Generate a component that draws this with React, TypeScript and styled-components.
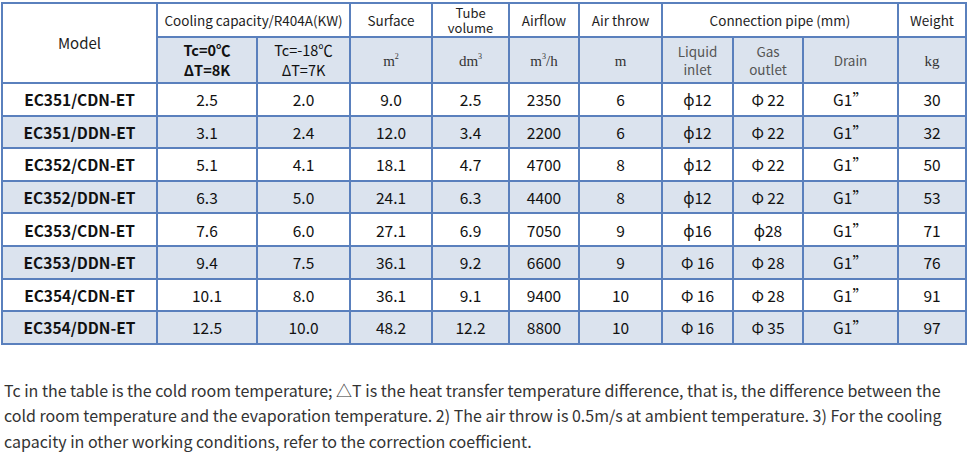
import React from "react";
import styled, { createGlobalStyle } from "styled-components";

const Global = createGlobalStyle`
  html, body { margin: 0; padding: 0; background: #fff; }
  body { font-family: "Noto Sans CJK SC", "Noto Sans", sans-serif; color: #222; }
`;

const Page = styled.div`
  padding: 2px 0 0 1px;
  width: 971px;
  box-sizing: border-box;
`;

const Table = styled.table`
  border-collapse: collapse;
  table-layout: fixed;
  width: 966px;
  border: 2px solid #5a80bd;
`;

const Th = styled.th<{ $shade?: boolean; $h?: number }>`
  border: 2px solid #5a80bd;
  background: ${(p) => (p.$shade ? "#dbe3ee" : "#ffffff")};
  font-weight: 400;
  font-size: 13.5px;
  line-height: 16px;
  color: #1e1e1e;
  text-align: center;
  vertical-align: middle;
  padding: 0 2px;
  height: ${(p) => (p.$h ? `${p.$h}px` : "auto")};
`;

const ModelHead = styled(Th)`
  font-size: 15px;
`;

const Stack = styled.span`
  display: block;
  font-size: 13px;
  line-height: 15px;
`;

const Grey = styled.span`
  display: block;
  color: #555;
  font-size: 13.5px;
  line-height: 18px;
`;

const Cond = styled.span<{ $bold?: boolean }>`
  display: block;
  font-size: 14.5px;
  line-height: 20px;
  font-weight: ${(p) => (p.$bold ? 700 : 400)};
  color: #111;
`;

const Unit = styled.span`
  font-family: "Liberation Serif", "DejaVu Serif", serif;
  font-size: 15px;
  color: #333;
  sup {
    font-size: 8px;
    vertical-align: 7px;
    line-height: 0;
  }
`;

const Row = styled.tr<{ $shade: boolean }>`
  background: ${(p) => (p.$shade ? "#dbe3ee" : "#ffffff")};
  height: 32.6px;
`;

const Td = styled.td<{ $bold?: boolean }>`
  border: 2px solid #5a80bd;
  text-align: center;
  vertical-align: middle;
  padding: 0 2px;
  font-size: 15.5px;
  line-height: 18px;
  color: #111;
  font-weight: ${(p) => (p.$bold ? 700 : 400)};
`;

const Note = styled.p`
  margin: 33px 0 0 3px;
  font-size: 16px;
  line-height: 25.5px;
  color: #333;
  width: 950px;
`;

const widths = [155, 100, 93, 82, 77, 70, 83, 71, 70, 95, 68];

const rows: string[][] = [
  ["EC351/CDN-ET", "2.5", "2.0", "9.0", "2.5", "2350", "6", "ϕ12", "Φ 22", "G1”", "30"],
  ["EC351/DDN-ET", "3.1", "2.4", "12.0", "3.4", "2200", "6", "ϕ12", "Φ 22", "G1”", "32"],
  ["EC352/CDN-ET", "5.1", "4.1", "18.1", "4.7", "4700", "8", "ϕ12", "Φ 22", "G1”", "50"],
  ["EC352/DDN-ET", "6.3", "5.0", "24.1", "6.3", "4400", "8", "ϕ12", "Φ 22", "G1”", "53"],
  ["EC353/CDN-ET", "7.6", "6.0", "27.1", "6.9", "7050", "9", "ϕ16", "ϕ28", "G1”", "71"],
  ["EC353/DDN-ET", "9.4", "7.5", "36.1", "9.2", "6600", "9", "Φ 16", "Φ 28", "G1”", "76"],
  ["EC354/CDN-ET", "10.1", "8.0", "36.1", "9.1", "9400", "10", "Φ 16", "Φ 28", "G1”", "91"],
  ["EC354/DDN-ET", "12.5", "10.0", "48.2", "12.2", "8800", "10", "Φ 16", "Φ 35", "G1”", "97"],
];

export default function App() {
  return (
    <Page>
      <Global />
      <Table>
        <colgroup>
          {widths.map((w, i) => (
            <col key={i} style={{ width: w }} />
          ))}
        </colgroup>
        <thead>
          <tr>
            <ModelHead rowSpan={2}>Model</ModelHead>
            <Th colSpan={2} $h={32}>Cooling capacity/R404A(KW)</Th>
            <Th>Surface</Th>
            <Th><Stack>Tube</Stack><Stack>volume</Stack></Th>
            <Th>Airflow</Th>
            <Th>Air throw</Th>
            <Th colSpan={3}>Connection pipe (mm)</Th>
            <Th>Weight</Th>
          </tr>
          <tr>
            <Th $shade $h={44}>
              <Cond $bold>Tc=0℃</Cond>
              <Cond $bold>ΔT=8K</Cond>
            </Th>
            <Th $shade>
              <Cond>Tc=-18℃</Cond>
              <Cond>ΔT=7K</Cond>
            </Th>
            <Th $shade><Unit>m<sup>2</sup></Unit></Th>
            <Th $shade><Unit>dm<sup>3</sup></Unit></Th>
            <Th $shade><Unit>m<sup>3</sup>/h</Unit></Th>
            <Th $shade><Unit>m</Unit></Th>
            <Th $shade><Grey>Liquid</Grey><Grey>inlet</Grey></Th>
            <Th $shade><Grey>Gas</Grey><Grey>outlet</Grey></Th>
            <Th $shade><Grey>Drain</Grey></Th>
            <Th $shade><Unit>kg</Unit></Th>
          </tr>
        </thead>
        <tbody>
          {rows.map((r, i) => (
            <Row key={i} $shade={i % 2 === 1}>
              {r.map((c, j) => (
                <Td key={j} $bold={j === 0}>{c}</Td>
              ))}
            </Row>
          ))}
        </tbody>
      </Table>
      <Note>
        Tc in the table is the cold room temperature; △T is the heat transfer temperature difference, that is, the difference between the cold room temperature and the evaporation temperature. 2) The air throw is 0.5m/s at ambient temperature. 3) For the cooling capacity in other working conditions, refer to the correction coefficient.
      </Note>
    </Page>
  );
}
